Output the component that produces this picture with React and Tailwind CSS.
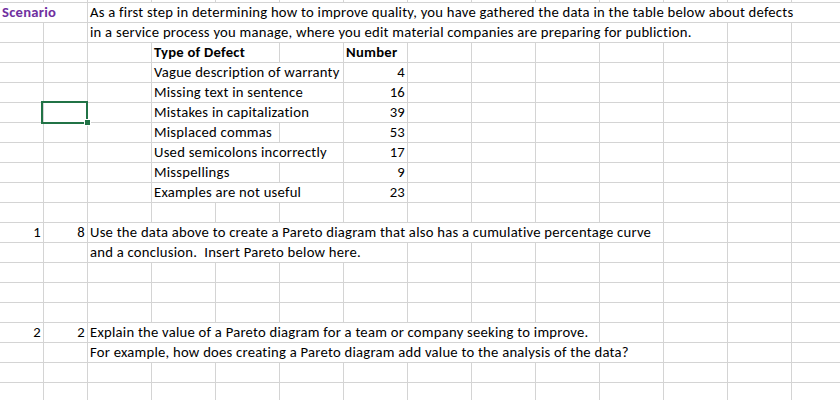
import React from 'react';

const COLS = [44, 44, 64, 64, 64, 64, 64, 64, 64, 64, 64, 64, 64, 64];
const A = 0, B = 1, C = 2, D = 3, G = 6;

// each cell: col, span (columns the text runs over), text, right, bold, color
const rows = [
  [
    { col: A, span: 2, text: 'Scenario', bold: true, color: 'text-[#7030a0]' },
    { col: C, span: 12, text: 'As a first step in determining how to improve quality, you have gathered the data in the table below about defects' },
  ],
  [{ col: C, span: 10, text: 'in a service process you manage, where you edit material companies are preparing for publiction.' }],
  [
    { col: D, span: 2, text: 'Type of Defect', bold: true },
    { col: G, span: 1, text: 'Number', bold: true },
  ],
  [{ col: D, span: 3, text: 'Vague description of warranty' }, { col: G, span: 1, text: '4', right: true }],
  [{ col: D, span: 3, text: 'Missing text in sentence' }, { col: G, span: 1, text: '16', right: true }],
  [{ col: D, span: 3, text: 'Mistakes in capitalization' }, { col: G, span: 1, text: '39', right: true }],
  [{ col: D, span: 2, text: 'Misplaced commas' }, { col: G, span: 1, text: '53', right: true }],
  [{ col: D, span: 3, text: 'Used semicolons incorrectly' }, { col: G, span: 1, text: '17', right: true }],
  [{ col: D, span: 2, text: 'Misspellings' }, { col: G, span: 1, text: '9', right: true }],
  [{ col: D, span: 3, text: 'Examples are not useful' }, { col: G, span: 1, text: '23', right: true }],
  [],
  [
    { col: A, span: 1, text: '1', right: true },
    { col: B, span: 1, text: '8', right: true },
    { col: C, span: 9, text: 'Use the data above to create a Pareto diagram that also has a cumulative percentage curve' },
  ],
  [{ col: C, span: 5, text: 'and a conclusion.\u00a0 Insert Pareto below here.' }],
  [],
  [],
  [],
  [
    { col: A, span: 1, text: '2', right: true },
    { col: B, span: 1, text: '2', right: true },
    { col: C, span: 8, text: 'Explain the value of a Pareto diagram for a team or company seeking to improve.' },
  ],
  [{ col: C, span: 9, text: 'For example, how does creating a Pareto diagram add value to the analysis of the data?' }],
  [],
  [],
];

const Row = ({ cells, height = 'h-5' }) => {
  const out = [];
  let i = 0;
  while (i < COLS.length) {
    const cell = cells.find(c => c.col === i);
    const span = cell ? cell.span : 1;
    const width = COLS.slice(i, i + span).reduce((a, b) => a + b, 0);
    out.push(
      <div
        key={i}
        style={{ width }}
        className={`shrink-0 border-r border-[#d4d4d4] px-[2px] flex items-end pb-[1px] whitespace-nowrap overflow-hidden ${
          cell && cell.right ? 'justify-end' : ''
        }`}
      >
        {cell && (
          <span className={`${cell.bold ? 'font-bold' : ''} ${cell.color || 'text-black'}`}>{cell.text}</span>
        )}
      </div>
    );
    i += span;
  }
  return <div className={`flex ${height} border-b border-[#d4d4d4]`}>{out}</div>;
};

export default function App() {
  return (
    <div
      className="w-[840px] h-[400px] overflow-hidden bg-white text-[14.67px] leading-[17px] tracking-[0.24px]"
      style={{ fontFamily: 'Carlito, Lato, "Liberation Sans", sans-serif' }}
    >
      <div className="relative">
        <Row cells={[]} height="h-[3px]" />
        {rows.map((cells, idx) => (
          <Row key={idx} cells={cells} />
        ))}
        {/* selected cell B6 */}
        <div className="absolute left-[41px] top-[101px] w-[47px] h-[23px] border-2 border-[#217346]" />
        <div className="absolute left-[84px] top-[119px] w-[7px] h-[7px] bg-[#217346] border border-white" />
      </div>
    </div>
  );
}
